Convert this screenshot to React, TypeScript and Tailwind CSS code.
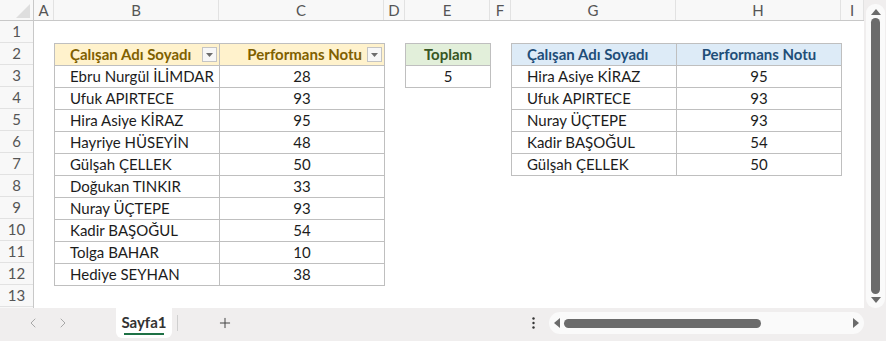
import { ChevronLeft, ChevronRight, Plus } from "lucide-react";

const FONT = { fontFamily: "Lato, 'Liberation Sans', sans-serif" };

const people: [string, number][] = [
  ["Ebru Nurgül İLİMDAR", 28],
  ["Ufuk APIRTECE", 93],
  ["Hira Asiye KİRAZ", 95],
  ["Hayriye HÜSEYİN", 48],
  ["Gülşah ÇELLEK", 50],
  ["Doğukan TINKIR", 33],
  ["Nuray ÜÇTEPE", 93],
  ["Kadir BAŞOĞUL", 54],
  ["Tolga BAHAR", 10],
  ["Hediye SEYHAN", 38],
];

const top5: [string, number][] = [
  ["Hira Asiye KİRAZ", 95],
  ["Ufuk APIRTECE", 93],
  ["Nuray ÜÇTEPE", 93],
  ["Kadir BAŞOĞUL", 54],
  ["Gülşah ÇELLEK", 50],
];

const columns: [string, string][] = [
  ["A", "w-[20px]"],
  ["B", "w-[165px]"],
  ["C", "w-[165px]"],
  ["D", "w-[21px]"],
  ["E", "w-[85px]"],
  ["F", "w-[21px]"],
  ["G", "w-[165px]"],
  ["H", "w-[165px]"],
  ["I", "w-[23px]"],
];

function FilterButton() {
  return (
    <span className="flex h-[15px] w-[15px] shrink-0 items-center justify-center border border-[#c4c4c4] bg-[#f7f7f7]">
      <svg width="7" height="4" viewBox="0 0 7 4">
        <path d="M0 0h7L3.5 4z" fill="#6d6d6d" />
      </svg>
    </span>
  );
}

function Cell({
  children,
  className = "",
  narrow = false,
}: {
  children?: React.ReactNode;
  className?: string;
  narrow?: boolean;
}) {
  return (
    <div
      className={`flex h-[22px] shrink-0 items-center border-r border-b border-[#bfbfbf] ${
        narrow ? "w-[85px]" : "w-[165px]"
      } ${className}`}
    >
      {children}
    </div>
  );
}

export default function App() {
  return (
    <div className="flex h-[341px] w-[886px] flex-col overflow-hidden bg-[#f0eeee] text-[15px] text-[#1c1c1c]" style={FONT}>
      <div className="flex h-[308px] shrink-0">
        {/* sheet */}
        <div className="flex w-[864px] shrink-0 flex-col overflow-hidden bg-white">
          {/* column letters */}
          <div className="flex h-[21px] shrink-0 border-b border-[#c8c8c8] bg-[#f8f8f8] text-[#555]">
            <div className="relative w-[34px] shrink-0 border-r border-[#c8c8c8]">
              <svg className="absolute right-[3px] bottom-[2px]" width="14" height="14" viewBox="0 0 14 14">
                <path d="M14 0v14H0z" fill="#dedede" />
              </svg>
            </div>
            {columns.map(([l, w]) => (
              <div key={l} className={`${w} flex shrink-0 items-center justify-center border-r border-[#e2e2e2] leading-none`}>
                {l}
              </div>
            ))}
          </div>

          <div className="flex flex-1">
            {/* row numbers */}
            <div className="flex w-[34px] shrink-0 flex-col border-r border-[#c8c8c8] bg-[#f8f8f8] text-[#555]">
              {Array.from({ length: 13 }, (_, i) => (
                <div key={i} className="flex h-[22px] shrink-0 items-center justify-center border-b border-[#e2e2e2] leading-none">
                  {i + 1}
                </div>
              ))}
            </div>

            {/* canvas */}
            <div className="flex items-start gap-[20px] pt-[22px] pl-[20px]">
              {/* main table */}
              <div className="flex shrink-0 flex-col border-t border-l border-[#bfbfbf]">
                <div className="flex bg-[#fff2cc] font-bold text-[#7f6000]">
                  <Cell className="justify-between pr-[2px] pl-[15px]">
                    <span>Çalışan Adı Soyadı</span>
                    <FilterButton />
                  </Cell>
                  <Cell className="justify-end gap-[5px] pr-[2px]">
                    <span>Performans Notu</span>
                    <FilterButton />
                  </Cell>
                </div>
                {people.map(([n, s]) => (
                  <div key={n} className="flex">
                    <Cell className="pl-[15px]">{n}</Cell>
                    <Cell className="justify-center">{s}</Cell>
                  </div>
                ))}
              </div>

              {/* total */}
              <div className="flex shrink-0 flex-col border-t border-l border-[#bfbfbf]">
                <Cell narrow className="justify-center bg-[#e2efda] font-bold text-[#375623]">
                  Toplam
                </Cell>
                <Cell narrow className="justify-center">
                  5
                </Cell>
              </div>

              {/* top 5 */}
              <div className="flex shrink-0 flex-col border-t border-l border-[#bfbfbf]">
                <div className="flex bg-[#ddebf7] font-bold text-[#1f4e78]">
                  <Cell className="pl-[15px]">Çalışan Adı Soyadı</Cell>
                  <Cell className="justify-center">Performans Notu</Cell>
                </div>
                {top5.map(([n, s]) => (
                  <div key={n} className="flex">
                    <Cell className="pl-[15px]">{n}</Cell>
                    <Cell className="justify-center">{s}</Cell>
                  </div>
                ))}
              </div>
            </div>
          </div>
        </div>

        {/* vertical scrollbar */}
        <div className="flex w-[22px] shrink-0 flex-col items-center pt-[4px] pl-[1px]">
          <div className="flex h-[304px] w-[19px] flex-col items-center rounded-[9px] bg-[#fafafa] py-[5px]">
            <svg width="10" height="6" viewBox="0 0 10 6">
              <path d="M5 0l5 6H0z" fill="#6b6b6b" />
            </svg>
            <div className="mt-[3px] w-[9px] flex-1 rounded-full bg-[#6b6b6b]" />
            <svg className="mt-[3px]" width="10" height="6" viewBox="0 0 10 6">
              <path d="M0 0h10L5 6z" fill="#6b6b6b" />
            </svg>
          </div>
        </div>
      </div>

      {/* sheet tabs */}
      <div className="flex h-[33px] shrink-0 items-start">
        <div className="flex h-[30px] shrink-0 items-center gap-[14px] pl-[25px] text-[#a8a8a8]">
          <ChevronLeft size={16} strokeWidth={1.5} />
          <ChevronRight size={16} strokeWidth={1.5} />
        </div>
        <div className="ml-[45px] flex h-[30px] w-[56px] shrink-0 flex-col items-center justify-center rounded-b-[6px] bg-white pt-[2px]">
          <span className="text-[15px] leading-[18px] font-bold text-[#333]">Sayfa1</span>
          <span className="mt-[2px] h-[2px] w-[40px] bg-[#1e7145]" />
        </div>
        <div className="mt-[7px] ml-[5px] h-[16px] w-px shrink-0 bg-[#cfcfcf]" />
        <div className="ml-[39px] flex h-[30px] shrink-0 items-center text-[#444]">
          <Plus size={16} strokeWidth={1.5} />
        </div>
        <div className="ml-[299px] flex h-[30px] shrink-0 items-center">
          <svg width="3" height="12" viewBox="0 0 3 12">
            <circle cx="1.5" cy="1.5" r="1.2" fill="#333" />
            <circle cx="1.5" cy="6" r="1.2" fill="#333" />
            <circle cx="1.5" cy="10.5" r="1.2" fill="#333" />
          </svg>
        </div>
        <div className="mt-[4px] ml-[14px] flex h-[22px] w-[315px] shrink-0 items-center rounded-[11px] bg-[#fafafa] px-[5px]">
          <svg width="6" height="10" viewBox="0 0 6 10">
            <path d="M6 0v10L0 5z" fill="#6b6b6b" />
          </svg>
          <div className="ml-[4px] h-[9px] w-[197px] rounded-full bg-[#6b6b6b]" />
          <div className="flex-1" />
          <svg width="6" height="10" viewBox="0 0 6 10">
            <path d="M0 0v10l6-5z" fill="#6b6b6b" />
          </svg>
        </div>
      </div>
    </div>
  );
}
